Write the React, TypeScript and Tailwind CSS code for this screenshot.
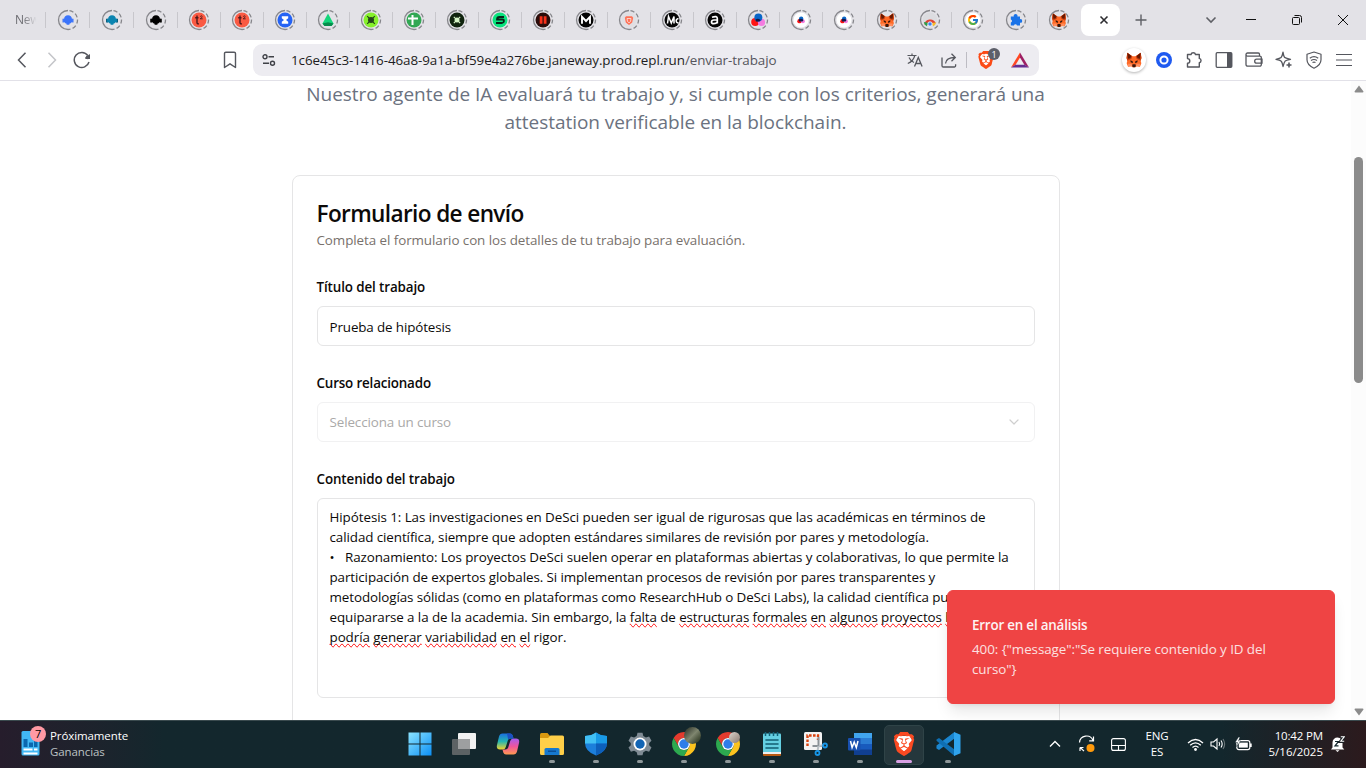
import React from "react";
import { FcGoogle } from "react-icons/fc";
import { SiBrave } from "react-icons/si";
import { ChevronDown } from "lucide-react";

type Kids = { children?: React.ReactNode };

function Fox({ size = 16 }: { size?: number }) {
  return (
    <svg width={size} height={size} viewBox="0 0 24 24">
      <path d="M2 1 9.500 6.500h5L22 1l1.200 8-1.200 4 1 4-2 5-4.500-.500L14 23h-4l-2.500-1.500L3 22l-2-5 1-4L.800 9Z" fill="#ff6a26" />
      <path d="M2 1 9.500 6.500 8 10.500 2 13 .800 9ZM22 1l-7.500 5.500 1.500 4 6 2.500 1.200-4Z" fill="#cc3f10" />
      <path d="M2 1 8 6 6.500 9.500 3 10ZM22 1 16 6l1.500 3.500L21 10Z" fill="#661800" />
      <path d="M6.500 12.500l3.500 1.200.300 3-3.300-1.500ZM17.500 12.500l-3.500 1.200-.300 3 3.300-1.500Z" fill="#33170d" />
      <path d="M3 17.500h5l1.500 3-2 1L3 22ZM21 17.500h-5l-1.500 3 2 1L21 22Z" fill="#ff8d5d" />
      <path d="M9.800 18.500h4.400l.5 2.500-1 2h-3.400l-1-2Z" fill="#3a1a10" />
    </svg>
  );
}

function Chrome({ size = 24 }: { size?: number }) {
  return (
    <svg width={size} height={size} viewBox="0 0 24 24">
      <path d="M1.610 6A12 12 0 0 1 22.390 6H12A6 6 0 0 0 6.800 15Z" fill="#e33b2e" />
      <path d="M22.390 6A12 12 0 0 1 12 24L17.200 15A6 6 0 0 0 12 6Z" fill="#fcc31e" />
      <path d="M12 24A12 12 0 0 1 1.610 6L6.800 15A6 6 0 0 0 17.200 15Z" fill="#2da94f" />
      <circle cx="12" cy="12" r="6" fill="#fff" />
      <circle cx="12" cy="12" r="4.700" fill="#2f7de9" />
    </svg>
  );
}

function Brave({ size, color }: { size: number; color: string }) {
  return (
    <span className="relative inline-flex">
      <svg width={size} height={size} viewBox="0 0 24 24" className="absolute inset-0">
        <path d="M6 4h12l2 4-2.500 9L12 21.500 6.500 17 4 8Z" fill="#fff" />
      </svg>
      <SiBrave size={size} color={color} className="relative" />
    </span>
  );
}

const bot = (c: string, side: string) => (
  <>
    <path d="M5 9.800h2v3.600H5ZM15 9.800h2v3.600h-2Z" fill={side} />
    <path d="M11 6.300a3.900 3.900 0 0 1 3.900 3.500h1v3.500h-1.300a3.900 3.900 0 0 1-2.200 1.400v1.100H9.600v-1.100a3.900 3.900 0 0 1-2.200-1.400H6.100V9.800h1A3.900 3.900 0 0 1 11 6.300Z" fill={c} />
  </>
);

const disc = (c: string) => <circle cx="11" cy="11" r="7.500" fill={c} />;

const t2 = (
  <>
    {disc("#fa5a43")}
    <path d="M9 6.500v7q0 1.700 1.900 1.300M7.200 8.800h3.300" fill="none" stroke="#4b1a1c" strokeWidth="1.400" />
    <path d="M12.200 7.500q1.600-1.300 2 0 .1.900-2 2.300h2.500" fill="none" stroke="#4b1a1c" strokeWidth=".9" />
  </>
);

const dots = (r: number, k: number) => (
  <>
    <circle cx={11 - k * 0.8} cy={11 + k * 0.600} r={r} fill="#ff1515" />
    <circle cx={11 + k} cy={11 + k * 0.700} r={r * 0.9} fill="#f47be0" />
    <circle cx={11 + k * 0.1} cy={11 - k * 0.700} r={r} fill="#0a66c8" />
    <path d="M8.500 10.500q2.500-1.500 5 .5l-1 1.500-3.500 0Z" fill="#131a4a" />
  </>
);

const favicons: React.ReactNode[] = [
  bot("#3b74fb", "#8fa9ee"),
  bot("#0b84b0", "#0e5f7e"),
  bot("#000", "#333"),
  t2,
  t2,
  <>
    {disc("#2563f4")}
    <path d="M7.800 7.300h6.400v2L12 11l2.200 1.700v2H7.800v-2L10 11 7.800 9.300Z" fill="#fff" />
  </>,
  <>
    <path d="M11 4.500 16.500 14.500 14.500 17h-7L5.500 14.500Z" fill="#12d67a" />
    <path d="M5.500 14.500 11 13.200l5.500 1.300L14.500 17h-7Z" fill="#078b4c" />
  </>,
  <>
    {disc("#86f02c")}
    <path d="m7.200 7.200 7.600 7.600m0-7.600-7.600 7.600" stroke="#25441a" strokeWidth="1.200" />
    <circle cx="11" cy="11" r="3" fill="#25441a" />
  </>,
  <>
    {disc("#31a853")}
    <path d="M9.500 6v10M5 9.500h10" stroke="#fff" strokeWidth="2" />
  </>,
  <>
    {disc("#10240e")}
    <path d="m7.800 7.800 6.400 6.400m0-6.400-6.400 6.400" stroke="#d6f5c6" strokeWidth="1.200" />
    <circle cx="11" cy="11" r="2.500" fill="#d6f5c6" />
  </>,
  <>
    {disc("#08e37d")}
    <path d="M15 8H10.500Q8 8 8 10.500h5.500q1.500 0 1.500 1.500t-2 2H7" fill="none" stroke="#08251a" strokeWidth="1.800" />
  </>,
  <>
    {disc("#2a0c0a")}
    <path d="M7.700 7.300h2.800v7.400H7.700ZM11.700 7.300h2.800v7.400h-2.800Z" fill="#f8301a" />
  </>,
  <>
    {disc("#050505")}
    <path d="M7 14.800V7.800l4 4.200 4-4.200v7" fill="none" stroke="#fff" strokeWidth="1.900" />
  </>,
  <>
    {disc("#e0dfe3")}
    <path d="M8 7.300h6l1.200 1.500-1 4.700L11 16l-3.200-2.500-1-4.700Z" fill="#ff7257" />
    <path d="m9 9.500 4 0-.500 3L11 13.800l-1.500-1.300Z" fill="none" stroke="#ffd9d0" strokeWidth=".9" />
  </>,
  <>
    {disc("#050505")}
    <path d="M6.500 14.500 7.500 7.500l2.800 6.500 2.700-6.500v7" fill="none" stroke="#fff" strokeWidth="1.500" />
    <path d="M17.500 9.500q-2.500.5-2.300 2.500.2 2 2.500 2" fill="none" stroke="#fff" strokeWidth="1.500" />
  </>,
  <>
    {disc("#050505")}
    <path d="M8 8.300q5.300-1.800 5.300 1.200v5M13.300 11H10q-2.500.2-2.500 1.900 0 1.700 2.300 1.700 2.500 0 3.500-1.600" fill="none" stroke="#fff" strokeWidth="1.700" />
  </>,
  dots(4, 3.500),
  <>
    {disc("#fff")}
    {dots(2.200, 1.900)}
  </>,
  <>
    {disc("#fff")}
    {dots(2.200, 1.900)}
  </>,
  <g transform="translate(3.500 3.500)">
    <Fox size={15} />
  </g>,
  <>
    {disc("#dcdce0")}
    <path d="M5.300 15.500a6 6 0 0 1 11.400-1.500L13 16Z" fill="#e04435" />
    <path d="M4.900 13a6 6 0 0 0 2.500 4.300L10 14Z" fill="#2aa14c" />
    <path d="M17.200 13.500a6 6 0 0 1-3 3.700L12.500 14Z" fill="#f6bd2a" />
    <circle cx="11" cy="15" r="2.200" fill="#3f82ee" stroke="#fff" strokeWidth=".8" />
  </>,
  <>
    {disc("#fff")}
    <g transform="translate(5 5)">
      <FcGoogle size={12} />
    </g>
  </>,
  <path d="M5.800 7.500h3a1.900 1.900 0 1 1 3.600 0H15v2.700a1.800 1.800 0 1 1 0 3.500v2.800h-3a1.600 1.600 0 0 0-3.100 0H5.800v-3a1.600 1.600 0 0 0 0-3.100Z" fill="#1a73e8" />,
  <g transform="translate(3.500 3.500)">
    <Fox size={15} />
  </g>,
];

function TabStrip() {
  return (
    <div className="flex h-10 items-center bg-[#e3e2e7]">
      <div className="w-[45px] shrink-0 overflow-hidden pl-[15px] text-[12px] tracking-[-0.3px]">
        <span className="bg-linear-to-r from-[#66666b] from-30% to-[#e3e2e7] to-90% bg-clip-text text-transparent">New</span>
      </div>
      {favicons.map((f, i) => (
        <div key={i} className={`flex h-4 shrink-0 items-center justify-center border-l border-[#c8c7cc] ${i < 3 ? "w-11" : "w-[43px]"}`}>
          <svg width="22" height="22" viewBox="0 0 22 22" className="shrink-0 overflow-visible">
            {f}
            <path d="M11 1.500a9.500 9.500 0 0 0 0 19" fill="none" stroke="#87878c" strokeWidth="1.300" />
            <path d="M11 1.500a9.500 9.500 0 0 1 0 19" fill="none" stroke="#87878c" strokeWidth="1.300" strokeDasharray="4.200 2.200" strokeDashoffset="-1.500" />
          </svg>
        </div>
      ))}
      <div className="ml-[1px] flex h-8 w-[39px] shrink-0 items-center justify-end rounded-lg bg-white pr-[11px]">
        <svg width="10" height="10" viewBox="0 0 10 10">
          <path d="m1.500 1.500 7 7m0-7-7 7" stroke="#2d2d31" strokeWidth="1.600" />
        </svg>
      </div>
      <div className="flex w-[42px] shrink-0 justify-center">
        <svg width="12" height="12" viewBox="0 0 12 12">
          <path d="M6 .500v11M.500 6h11" stroke="#5f6066" strokeWidth="1.400" />
        </svg>
      </div>
      <div className="ml-[29px] flex w-10 shrink-0 justify-center">
        <svg width="12" height="8" viewBox="0 0 12 8">
          <path d="m1.500 1.500 4.500 4.500 4.500-4.500" fill="none" stroke="#5f6066" strokeWidth="1.600" />
        </svg>
      </div>
      <div className="flex w-10 shrink-0 justify-center">
        <svg width="10" height="10" viewBox="0 0 10 10">
          <path d="M0 4.500h10" stroke="#111" />
        </svg>
      </div>
      <div className="flex w-[52px] shrink-0 justify-center">
        <svg width="10" height="10" viewBox="0 0 10 10" fill="none" stroke="#111">
          <rect x=".5" y="2.500" width="7" height="7" rx="1" />
          <path d="M2.500.500h5a2 2 0 0 1 2 2v5" />
        </svg>
      </div>
      <div className="flex w-10 shrink-0 justify-center">
        <svg width="10" height="10" viewBox="0 0 10 10">
          <path d="m0 0 10 10M10 0 0 10" stroke="#111" />
        </svg>
      </div>
    </div>
  );
}

function Tool({ children }: Kids) {
  return <div className="flex w-[30px] shrink-0 items-center justify-center">{children}</div>;
}

function Toolbar() {
  return (
    <div className="flex h-[41px] items-center border-b border-[#e2e1e8] bg-white pl-[7px]">
      <Tool>
        <svg width="10" height="16" viewBox="0 0 10 16">
          <path d="M8.500.700 1.500 8l7 7.300" fill="none" stroke="#55575e" strokeWidth="1.500" />
        </svg>
      </Tool>
      <Tool>
        <svg width="10" height="16" viewBox="0 0 10 16">
          <path d="m1.500.700 7 7.300-7 7.300" fill="none" stroke="#c4c5c9" strokeWidth="1.500" />
        </svg>
      </Tool>
      <Tool>
        <svg width="18" height="18" viewBox="0 0 18 18">
          <path d="M16 11A7.500 7.500 0 1 1 14.800 4.500" fill="none" stroke="#55575e" strokeWidth="1.500" />
          <path d="M17 3v5h-4.500q-1-1.200.5-2.300Z" fill="#55575e" />
          <circle cx="14.800" cy="6.300" r="1.900" fill="#55575e" />
        </svg>
      </Tool>
      <div className="ml-[118px] flex w-[30px] shrink-0 justify-center">
        <svg width="14" height="18" viewBox="0 0 14 18">
          <path d="M1.500 16.500V2.500a1.300 1.300 0 0 1 1.300-1.300h8.400a1.300 1.300 0 0 1 1.300 1.300v14L7 12.800Z" fill="none" stroke="#55575e" strokeWidth="1.400" strokeLinejoin="round" />
        </svg>
      </div>
      <div className="ml-2 flex h-8 w-[786px] shrink-0 items-center rounded-[9px] bg-[#edecf1] pr-1">
        <div className="flex w-8 shrink-0 justify-center">
          <svg width="14" height="12" viewBox="0 0 14 12" fill="none" stroke="#3f4147" strokeWidth="1.400">
            <circle cx="3" cy="2.800" r="2" />
            <path d="M6.500 2.800H12M1 9.200h6" />
            <circle cx="10.500" cy="9.200" r="2" />
          </svg>
        </div>
        <div className="ml-1.5 pt-px text-[13.400px] tracking-[-0.070px] whitespace-nowrap text-[#1d1d22]">
          1c6e45c3-1416-46a8-9a1a-bf59e4a276be.janeway.prod.repl.run<span className="text-[#55555c]">/enviar-trabajo</span>
        </div>
        <div className="ml-auto flex h-full items-center">
          <div className="flex w-[34px] justify-center">
            <svg width="16" height="14" viewBox="0 0 16 14" fill="none" stroke="#55575e" strokeWidth="1.200">
              <path d="M.5 2.500h9M5 .5v2M7.800 2.500Q6.500 8 .8 10.500M2 4.500q1.500 3.500 5 5" />
              <path d="m7.500 13.500 3.800-9 3.800 9M8.800 10.500h5" strokeWidth="1.300" />
            </svg>
          </div>
          <div className="flex w-[34px] justify-center">
            <svg width="16" height="15" viewBox="0 0 16 15" fill="none" stroke="#55575e" strokeWidth="1.300">
              <path d="M1 4.500v8.200A1.300 1.300 0 0 0 2.300 14h11a1.300 1.300 0 0 0 1.300-1.300v-1.500" />
              <path d="M4.500 10.500Q5 4.500 14 4.500M10.500.800l3.800 3.700-3.800 3.700" />
            </svg>
          </div>
          <div className="h-4 w-px bg-[#bdbcc3]" />
          <div className="relative flex w-[38px] justify-center">
            <Brave size={18} color="#fb4a16" />
            <span className="absolute -top-[3px] left-[21px] flex h-3 w-3 items-center justify-center rounded-full bg-[#5d5f69] text-[9px] leading-none text-white">1</span>
          </div>
          <div className="flex w-[30px] justify-center">
            <svg width="18" height="16" viewBox="0 0 18 16">
              <path d="M9 .500 0 15.500l4.500-2.500L9 5.500Z" fill="#ff4724" />
              <path d="M9 .500 18 15.500 13.500 13 9 5.500Z" fill="#9e1f63" />
              <path d="M0 15.500h18L13.500 12.800h-9Z" fill="#662d91" />
            </svg>
          </div>
        </div>
      </div>
      <div className="ml-20 flex items-center text-[#55575e]">
        <Tool>
          <div className="flex h-6 w-6 shrink-0 items-center justify-center rounded-full bg-white shadow-[0_1px_3px_rgba(0,0,0,0.3)]">
            <Fox size={16} />
          </div>
        </Tool>
        <Tool>
          <svg width="16" height="16" viewBox="0 0 16 16">
            <circle cx="8" cy="8" r="8" fill="#1f5af0" />
            <circle cx="8" cy="8" r="3.600" fill="none" stroke="#fff" strokeWidth="2" />
          </svg>
        </Tool>
        <Tool>
          <svg width="18" height="18" viewBox="0 0 18 18" fill="none" stroke="#55575e" strokeWidth="1.400" strokeLinejoin="round">
            <path d="M2.500 3.500H6a2.300 2.300 0 0 1 4.500 0h3.800v3.900a2.200 2.200 0 0 1 0 4.300v4.300H2.500v-3.800a2.300 2.300 0 0 0 0-4.600Z" />
          </svg>
        </Tool>
        <Tool>
          <svg width="18" height="16" viewBox="0 0 18 16">
            <rect x="1.200" y=".7" width="15.600" height="14.600" rx="1" fill="none" stroke="#55575e" strokeWidth="1.300" />
            <path d="M12 1h5v14h-5Z" fill="#55575e" />
          </svg>
        </Tool>
        <Tool>
          <svg width="18" height="16" viewBox="0 0 18 16" fill="none" stroke="#55575e" strokeWidth="1.300">
            <path d="M14.500 4V2.200A1.200 1.200 0 0 0 13.300 1H2.500a1.500 1.500 0 0 0-1.500 1.500v10A1.700 1.700 0 0 0 2.700 14.200h12.100a1.500 1.500 0 0 0 1.500-1.500V5.600a1.500 1.500 0 0 0-1.500-1.500H2.500A1.500 1.500 0 0 1 1 2.600" />
            <path d="M17 7.200h-5.300a2 2 0 0 0 0 4H17Z" />
          </svg>
        </Tool>
        <Tool>
          <svg width="18" height="18" viewBox="0 0 18 18" fill="none" stroke="#55575e" strokeWidth="1.300" strokeLinejoin="round">
            <path d="M8 1.200q.8 5 2 5.500T15.500 8.300q-4.500.8-5.400 1.800T8 15.500Q7.200 11 6 10 5 9 1 8.300 5 7.500 6.100 6.500 7.200 5.500 8 1.200Z" />
            <path d="M14 11.500v5M11.500 14h5" strokeWidth="1.600" />
          </svg>
        </Tool>
        <Tool>
          <svg width="16" height="18" viewBox="0 0 16 18" fill="none" stroke="#55575e" strokeWidth="1.200">
            <path d="M8 1 15 3.300v5.500q0 5.300-7 8.400-7-3.100-7-8.400V3.300Z" strokeLinejoin="round" />
            <path d="M3.800 7.200q4.200-3 8.400 0M5 9.500q3-2 6 0M6.500 11.500q1.500-.9 3 0" />
          </svg>
        </Tool>
        <Tool>
          <svg width="16" height="14" viewBox="0 0 16 14">
            <path d="M0 1.500h16M0 7h16M0 12.500h16" stroke="#55575e" strokeWidth="1.200" />
          </svg>
        </Tool>
      </div>
    </div>
  );
}

function Sp({ children }: Kids) {
  return <span className="[text-decoration-line:spelling-error]">{children}</span>;
}

function Field({ label, children }: Kids & { label: React.ReactNode }) {
  return (
    <div className="flex flex-col gap-[9px]">
      <div className="flex h-5 items-center text-[13.400px] font-semibold whitespace-nowrap">{label}</div>
      {children}
    </div>
  );
}

function Page() {
  return (
    <div className="min-w-0 flex-1 overflow-hidden text-[#0c0a09]">
      <div className="-mt-px text-center text-[19px] leading-7 text-[#6b7280]">
        <div className="tracking-[-0.030px]">Nuestro agente de IA evaluará tu trabajo y, si cumple con los criterios, generará una</div>
        <div className="tracking-[-0.040px]">attestation verificable en la blockchain.</div>
      </div>
      <div className="mx-auto mt-[39px] h-[700px] w-[768px] rounded-lg border border-[#e5e5e6] px-6 pt-6">
        <div className="h-6 pt-0.5 text-[22.600px] leading-6 font-semibold tracking-[-0.630px]">Formulario de envío</div>
        <div className="mt-1.5 text-[13.400px] leading-5 tracking-[-0.070px] text-[#78716c]">
          Completa el formulario con los detalles de tu trabajo para evaluación.
        </div>
        <div className="mt-[27px] flex flex-col gap-[27px]">
          <Field label={<span className="tracking-[-0.110px]">Título del trabajo</span>}>
            <div className="flex h-10 items-center rounded-md border border-[#e5e5e6] px-3 pt-0.5 text-[13.400px] tracking-[-0.120px]">Prueba de hipótesis</div>
          </Field>
          <Field label={<span className="tracking-[-0.170px]">Curso relacionado</span>}>
            <div className="flex h-10 items-center justify-between rounded-md border border-[#f1f1f2] px-3 text-[13.400px] tracking-[-0.110px] text-[#aaa9a8]">
              Selecciona un curso
              <ChevronDown size={16} strokeWidth={1.800} color="#cfcfcf" />
            </div>
          </Field>
          <Field label={<span className="tracking-[-0.100px]">Contenido del trabajo</span>}>
            <div className="h-[200px] rounded-md border border-[#e5e5e6] px-3 py-2 text-[13.400px] leading-5 whitespace-nowrap">
              <div className="tracking-[-0.068px]">Hipótesis 1: Las investigaciones en DeSci pueden ser igual de rigurosas que las académicas en términos de</div>
              <div className="tracking-[-0.085px]">calidad científica, siempre que adopten estándares similares de revisión por pares y metodología.</div>
              <div className="flex tracking-[-0.093px]">
                <span className="w-[15.500px]">•</span>Razonamiento: Los proyectos DeSci suelen operar en plataformas abiertas y colaborativas, lo que permite la
              </div>
              <div className="tracking-[-0.095px]">participación de expertos globales. Si implementan procesos de revisión por pares transparentes y</div>
              <div className="tracking-[-0.090px]">metodologías sólidas (como en plataformas como ResearchHub o DeSci Labs), la calidad científica puede</div>
              <div className="tracking-[-0.090px]">
                equipararse a la de la academia. Sin embargo, la <Sp>falta</Sp> de <Sp>estructuras</Sp> <Sp>formales</Sp> <Sp>en</Sp> <Sp>algunos</Sp> <Sp>proyectos</Sp> <Sp>ha</Sp>
              </div>
              <div className="tracking-[-0.065px]">
                <Sp>podría</Sp> <Sp>generar</Sp> <Sp>variabilidad</Sp> <Sp>en</Sp> <Sp>el</Sp> rigor.
              </div>
            </div>
          </Field>
        </div>
      </div>
    </div>
  );
}

function Scrollbar() {
  return (
    <div className="flex w-[15px] shrink-0 flex-col items-center bg-[#fcfcfc] pt-1 pb-1">
      <svg width="10" height="8" viewBox="0 0 10 8">
        <path d="M5 .500 9.500 6.500Q9.500 7.500 8.500 7.500h-7Q.500 7.500.500 6.500Z" fill="#8b8b8b" />
      </svg>
      <div className="mt-16 h-[226px] w-[9px] rounded-full bg-[#8b8b8b]" />
      <svg width="10" height="8" viewBox="0 0 10 8" className="mt-auto">
        <path d="M5 7.500 9.500 1.500Q9.500.500 8.500.500h-7Q.500.500.500 1.500Z" fill="#8b8b8b" />
      </svg>
    </div>
  );
}

function Toast() {
  return (
    <div className="absolute right-[31px] bottom-4 w-[388px] rounded-md border border-[#ef4444] bg-[#ef4444] p-6 text-[13.400px] leading-5 shadow-lg">
      <div className="font-semibold tracking-[-0.200px] text-[#fdf3f3]">Error en el análisis</div>
      <div className="mt-1 tracking-[-0.070px] text-[#fce1e1]">
        <div>400: {"{"}"message":"Se requiere contenido y ID del</div>
        <div>curso"{"}"}</div>
      </div>
    </div>
  );
}

function TaskItem({ children, run = true, active = false }: Kids & { run?: boolean; active?: boolean }) {
  return (
    <div className="flex w-11 shrink-0 justify-center">
      <div className={active ? "flex h-10 w-10 flex-col items-center rounded-[5px] border border-[#2f4347] bg-[#25373c]" : "flex h-10 w-10 flex-col items-center border border-transparent"}>
        <div className="flex h-[34px] w-full items-center justify-center pt-0.5">{children}</div>
        {run && <div className={active ? "h-[3px] w-4 rounded-full bg-[#d8a0e4]" : "h-[3px] w-1.5 rounded-full bg-[#8e9799]"} />}
      </div>
    </div>
  );
}

function Taskbar() {
  return (
    <div className="relative flex h-12 shrink-0 items-center border-t border-[#3a4a4e] bg-linear-to-r from-[#261d2c] via-[#13272d] via-12% to-[#13272d] to-88% text-[11.500px] tracking-[-0.150px] text-white">
      <div className="absolute inset-y-0 right-0 w-36 bg-linear-to-r from-transparent to-[#2c1a1d]" />
      <div className="relative flex w-[398px] shrink-0 items-center pb-0.5 pl-[21px]">
        <div className="relative mt-0.5 h-7 w-[29px] shrink-0">
          <svg width="19" height="25" viewBox="0 0 19 25">
            <rect x=".5" width="18" height="24.500" rx="1.500" fill="#41b7f4" />
            <path d="M2.500 8h4v8h-4ZM8 11.500h4V16H8ZM13 10h3.500v6H13Z" fill="#0b67ae" />
            <path d="M2.500 17.500h9v2h-9ZM13 17.500h3.500v2H13ZM2.500 21.500h14v2h-14Z" fill="#fff" />
          </svg>
          <div className="absolute -top-[5px] left-[9px] flex h-4 w-4 items-center justify-center rounded-full bg-[#ff99a4] text-[11px] leading-none text-black">7</div>
        </div>
        <div className="leading-4">
          <div className="tracking-[-0.100px]">Próximamente</div>
          <div className="tracking-[-0.100px] text-[#bcc1c3]">Ganancias</div>
        </div>
      </div>
      <TaskItem run={false}>
        <svg width="24" height="24" viewBox="0 0 24 24">
          <defs>
            <linearGradient id="win" x1="0" y1="0" x2="1" y2="1">
              <stop offset="0" stopColor="#8be4ff" />
              <stop offset="1" stopColor="#0c8ff5" />
            </linearGradient>
          </defs>
          <path d="M.5.500h11v11H.5ZM12.500.500h11v11h-11ZM.5 12.500h11v11H.5ZM12.500 12.500h11v11h-11Z" fill="url(#win)" />
        </svg>
      </TaskItem>
      <TaskItem run={false}>
        <svg width="24" height="22" viewBox="0 0 24 22">
          <rect x="6" width="18" height="16" rx="1" fill="#f2f2f2" />
          <rect y="6" width="18" height="16" rx="1" fill="#5c6264" />
          <path d="M6 6h12v10H6Z" fill="#9d9fa0" />
        </svg>
      </TaskItem>
      <TaskItem run={false}>
        <svg width="24" height="24" viewBox="0 0 24 24">
          <defs>
            <linearGradient id="cpl" x1="0" y1="0" x2="0" y2="1">
              <stop offset="0" stopColor="#1a6fe0" />
              <stop offset=".5" stopColor="#25b6b0" />
              <stop offset="1" stopColor="#f2d32c" />
            </linearGradient>
            <linearGradient id="cpr" x1="0" y1="0" x2="0" y2="1">
              <stop offset="0" stopColor="#a55cf0" />
              <stop offset=".5" stopColor="#f0559b" />
              <stop offset="1" stopColor="#ff9a50" />
            </linearGradient>
          </defs>
          <path d="M6.500 1.500h7.500q2 0 2.700 2l.8 3h-3q-2 0-2.700 2L9.800 15q-.8 2.500-3 2.500H4q-4 0-3-4.500l2-8.500q.8-3 3.500-3Z" fill="url(#cpl)" />
          <path d="M17.500 22.500H10q-2 0-2.700-2l-.8-3h3q2 0 2.700-2L14.200 9q.8-2.500 3-2.500H20q4 0 3 4.500l-2 8.500q-.8 3-3.500 3Z" fill="url(#cpr)" />
          <path d="M14 1.500q2 0 2.700 2l.8 3h-3q-1.500 0-2.300 1.200L11 1.500Z" fill="#1c4fc2" />
        </svg>
      </TaskItem>
      <TaskItem>
        <svg width="24" height="22" viewBox="0 0 24 22">
          <path d="M0 1.500Q0 0 1.500 0h6L10 3v4H0Z" fill="#d9980f" />
          <path d="M0 5h8l2.500-2.500h12A1.500 1.500 0 0 1 24 4v16.500a1.500 1.500 0 0 1-1.500 1.500h-21A1.500 1.500 0 0 1 0 20.500Z" fill="#ffcf48" />
          <path d="M4.500 22v-5.500Q4.500 15 6 15h12q1.500 0 1.500 1.500V22Z" fill="#1679cf" />
          <path d="M8 17.500h8v1.500H8Z" fill="#0a4f96" />
        </svg>
      </TaskItem>
      <TaskItem>
        <svg width="24" height="24" viewBox="0 0 24 24">
          <path d="M12 .500q4 3 11 3.500V11q0 8.500-11 12.500Q1 19.500 1 11V4q7-.500 11-3.500Z" fill="#1c7fdb" />
          <path d="M12 .500Q8 3.500 1 4v7.500h11Z" fill="#41c0f4" />
          <path d="M12 .500q4 3 11 3.500v7.500H12Z" fill="#199ae6" />
          <path d="M12 11.500h11q-.5 8-11 12Z" fill="#0d5fbb" />
        </svg>
      </TaskItem>
      <TaskItem>
        <svg width="24" height="24" viewBox="0 0 24 24">
          <path d="M9.500.800h5l.8 3.200 2.600 1.500 3.200-1 2.400 4.200-2.300 2.300v2.200l2.300 2.300-2.400 4.200-3.200-1-2.600 1.500-.8 3.100h-5l-.8-3.100-2.600-1.500-3.200 1L.5 15.500l2.300-2.300V11L.5 8.700l2.400-4.200 3.200 1L8.700 4Z" fill="#7f8b94" />
          <circle cx="12" cy="12" r="6.500" fill="#fff" />
          <circle cx="12" cy="12" r="4.700" fill="#1265b5" />
        </svg>
      </TaskItem>
      <TaskItem>
        <div className="relative flex">
          <Chrome />
          <div className="absolute -top-[5px] left-3 h-[17px] w-[17px] rounded-full bg-linear-to-br from-[#252b22] via-[#7f866f] via-50% to-[#1d2713]" />
        </div>
      </TaskItem>
      <TaskItem>
        <div className="relative flex">
          <Chrome />
          <div className="absolute top-0 left-[13px] h-[11px] w-[11px] rounded-full bg-linear-to-br from-[#dcd6cf] to-[#8c7b71]" />
        </div>
      </TaskItem>
      <TaskItem>
        <svg width="20" height="24" viewBox="0 0 20 24">
          <rect x="1" y="20" width="18" height="4" rx="1" fill="#b95a12" />
          <rect x="1" y="1.500" width="18" height="20" rx="1" fill="#64cfe2" />
          <path d="M1 20h18v2H1Z" fill="#eee" />
          <path d="M4 8h12M4 12h12M4 16h12" stroke="#125e73" strokeWidth="1.600" strokeLinecap="round" />
          <path d="M3.500 0v4M7.500 0v4M11.500 0v4M15.500 0v4" stroke="#126179" strokeWidth="1.500" />
        </svg>
      </TaskItem>
      <TaskItem>
        <svg width="26" height="24" viewBox="0 0 26 24">
          <rect x="1" y="0" width="18" height="18" rx="1.500" fill="#f3f3f3" />
          <path d="M4.500 14V3.500H15V8" fill="none" stroke="#d8420e" strokeWidth="2.400" strokeDasharray="2.600 1.400" />
          <path d="M15.500 5v9.500M9.500 14h10" stroke="#8b9297" strokeWidth="2" />
          <path d="m16 14 5-1M15.500 14l-1 5" stroke="#b9c0c5" strokeWidth="2" />
          <circle cx="22" cy="13.500" r="2" fill="none" stroke="#1795e6" strokeWidth="1.800" />
          <circle cx="14.500" cy="21" r="2" fill="none" stroke="#1795e6" strokeWidth="1.800" />
        </svg>
      </TaskItem>
      <TaskItem>
        <svg width="24" height="22" viewBox="0 0 24 22">
          <rect x="6" width="18" height="22" rx="1" fill="#185abd" />
          <path d="M6 0h18v5.500H6Z" fill="#41a5ee" />
          <path d="M6 5.500h18V11H6Z" fill="#2b7cd3" />
          <path d="M6 16.500h18V22H6Z" fill="#103f91" />
          <rect y="5" width="12.500" height="12.500" rx="1" fill="#1850b0" />
          <path d="m2.500 8 1.600 6.500L6.200 9l2.100 5.500L10 8" fill="none" stroke="#fff" strokeWidth="1.500" />
        </svg>
      </TaskItem>
      <TaskItem active>
        <Brave size={24} color="#fb4a22" />
      </TaskItem>
      <TaskItem>
        <svg width="25" height="24" viewBox="0 0 25 24">
          <path d="M18.500 0 5 13.800l-3 2.700L.5 15.300v-1.800L18.500 0Z" fill="#1b86cf" />
          <path d="M18.500 0v6.500L3 18l-2.500-1.500v-1.300Z" fill="#1b86cf" />
          <path d="M18.500 24v-6.500L3 6 .5 7.500v1.300Z" fill="#0f6fb3" />
          <path d="m18 0 6.500 2.800v18.400L18 24Z" fill="#2fa4ee" />
        </svg>
      </TaskItem>
      <div className="relative ml-[73px] flex items-center pb-px">
        <div className="flex w-6 shrink-0 justify-center">
          <svg width="12" height="8" viewBox="0 0 12 8">
            <path d="m1 6.500 5-5 5 5" fill="none" stroke="#fff" strokeWidth="1.400" />
          </svg>
        </div>
        <div className="flex w-10 shrink-0 justify-center">
          <svg width="18" height="18" viewBox="0 0 18 18" fill="none" stroke="#fff" strokeWidth="1.200">
            <path d="M1.500 7.500A7 7 0 0 1 15 5.500M15.500 1.500v4.300h-4.300M2 12.500h3.500M2 12.500V16M2.300 12.500 6 16.200" />
            <circle cx="12.500" cy="13" r="4" fill="#ff9a0c" stroke="none" />
          </svg>
        </div>
        <div className="flex w-[23px] shrink-0 justify-center">
          <svg width="15" height="13" viewBox="0 0 15 13" fill="none" stroke="#fff" strokeWidth="1.100">
            <rect x=".6" y=".6" width="13.800" height="11.800" rx="2" />
            <path d="M.6 7.500h13.800M7.500 7.500v5" />
          </svg>
        </div>
        <div className="w-[54px] shrink-0 text-center leading-4">
          <div>ENG</div>
          <div>ES</div>
        </div>
        <div className="flex w-[22px] shrink-0 justify-center">
          <svg width="17" height="13" viewBox="0 0 17 13" fill="none" stroke="#fff" strokeWidth="1.300">
            <path d="M1 5q7.500-7 15 0M3.200 7.300q5.300-4.800 10.600 0M5.500 9.500q3-2.700 6 0" />
            <circle cx="8.500" cy="11.500" r="1.400" fill="#fff" stroke="none" />
          </svg>
        </div>
        <div className="flex w-6 shrink-0 justify-center">
          <svg width="16" height="14" viewBox="0 0 16 14" fill="none" stroke="#fff" strokeWidth="1.100">
            <path d="M1 5h2.500L7 2v10L3.500 9H1ZM9 5q1.300 2 0 4M11 3.500q2.300 3.500 0 7" />
            <path d="M13 2q3.300 5 0 10" stroke="#6a7679" />
          </svg>
        </div>
        <div className="flex w-[26px] shrink-0 justify-center">
          <svg width="17" height="14" viewBox="0 0 17 14">
            <rect x="1.800" y="3.600" width="13" height="9" rx="2" fill="none" stroke="#fff" strokeWidth="1.200" />
            <rect x="3.800" y="5.600" width="9" height="5" fill="#fff" />
            <path d="M15 6.500h1.700v3.500H15Z" fill="#fff" />
            <path d="M3.500 0 0 5.500h2.500L1.500 9.500 6 4H3.500L5 0Z" fill="#fff" stroke="#13272d" strokeWidth=".5" />
          </svg>
        </div>
        <div className="w-[67px] shrink-0 text-right leading-4">
          <div>10:42 PM</div>
          <div className="tracking-[0px]">5/16/2025</div>
        </div>
        <div className="flex w-[30px] shrink-0 justify-center">
          <svg width="14" height="16" viewBox="0 0 14 16">
            <path d="M1.500 11.500V6.500A5 5 0 0 1 6.500 1.500q5 .5 5 5V11.500l1.800 2H0ZM4.500 14.300h4L6.500 16Z" fill="#fff" />
            <path d="M4 5.500h3.500L4 9.800h3.500" fill="none" stroke="#13272d" strokeWidth="1.200" />
            <path d="M9.500 1H13L9.500 5.500H13" fill="none" stroke="#1c2126" strokeWidth="3" />
            <path d="M9.800.8H13.200L9.800 5.200H13.200" fill="none" stroke="#fff" strokeWidth="1.100" />
          </svg>
        </div>
      </div>
    </div>
  );
}

export default function App() {
  return (
    <div className="flex h-[768px] w-[1366px] flex-col overflow-hidden bg-white font-['Open_Sans',sans-serif]">
      <TabStrip />
      <Toolbar />
      <div className="relative flex min-h-0 flex-1 overflow-hidden">
        <Page />
        <Scrollbar />
        <Toast />
      </div>
      <Taskbar />
    </div>
  );
}
